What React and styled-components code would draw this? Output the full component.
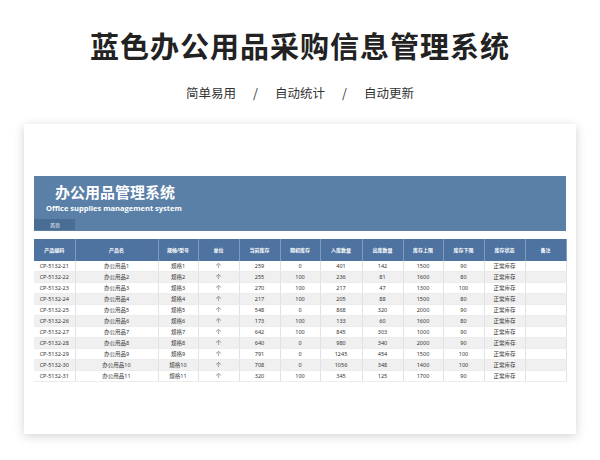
import React from "react";
import styled, { createGlobalStyle } from "styled-components";

const Global = createGlobalStyle`
  body { margin: 0; background: #fff; font-family: "Noto Sans CJK SC", "Noto Sans", sans-serif; }
`;

const Page = styled.div`
  width: 600px; height: 460px; overflow: hidden;
  display: flex; flex-direction: column; align-items: center;
`;
const Title = styled.h1`
  margin: 25px 0 0; font-size: 29px; font-weight: 700; color: #222; letter-spacing: 1px; line-height: 40px;
`;
const Sub = styled.div`
  margin-top: 19px; font-size: 12.5px; color: #333; display: flex; gap: 17px; line-height: 18px;
`;
const Card = styled.div`
  margin-top: 22px; width: 552px; height: 310px; background: #fff;
  box-shadow: 0 2px 10px rgba(0,0,0,0.18);
  padding: 52px 10px 0; box-sizing: border-box;
`;
const Banner = styled.div`
  background: #5b80a8; height: 55px; display: flex; flex-direction: column; color: #fff;
`;
const BTitle = styled.div`
  font-size: 15px; font-weight: 700; padding-left: 21px; margin-top: 6px; line-height: 20px;
`;
const BSub = styled.div`
  font-size: 7.5px; font-weight: 700; padding-left: 12px; line-height: 12px;
  font-family: "Open Sans", sans-serif;
`;
const Tab = styled.div`
  margin-top: auto; margin-bottom: 1px; width: 41px; height: 11px; background: #4a6d95;
  font-size: 5px; line-height: 11px; padding-left: 16px; box-sizing: border-box;
`;
const Table = styled.table`
  margin-top: 8px; width: 100%; border-collapse: collapse; table-layout: fixed;
  font-size: 5.5px; color: #333; font-family: "Noto Sans", "Noto Sans CJK SC", sans-serif;
`;
const Th = styled.th`
  background: #4e73a0; color: #fff; font-weight: 700; height: 22px; padding: 0;
  border-right: 1px solid #7f9bbd; font-size: 5px; line-height: 8px;
`;
const Tr = styled.tr`
  background: ${p => (p.$alt ? "#f0f0f0" : "#fff")};
`;
const Td = styled.td`
  height: 10px; padding: 0; line-height: 10px; text-align: center; border-right: 1px solid #e2e2e2;
  border-bottom: 1px solid #ececec; white-space: nowrap; color: #333;
`;

const widths = [41, 83, 40, 41, 41, 40, 42, 41, 40, 41, 41, 41];
const heads = ["产品编码", "产品名", "规格/型号", "单位", "当前库存", "期初库存", "入库数量", "出库数量", "库存上限", "库存下限", "库存状态", "备注"];
const data = [
  [259, 0, 401, 142, 1500, 90],
  [255, 100, 236, 81, 1600, 80],
  [270, 100, 217, 47, 1300, 100],
  [217, 100, 205, 88, 1500, 80],
  [548, 0, 868, 320, 2000, 90],
  [173, 100, 133, 60, 1600, 80],
  [642, 100, 845, 303, 1000, 90],
  [640, 0, 980, 340, 2000, 90],
  [791, 0, 1245, 454, 1500, 100],
  [708, 0, 1056, 348, 1400, 100],
  [320, 100, 345, 125, 1700, 90],
];

export default function App() {
  return (
    <Page>
      <Global />
      <Title>蓝色办公用品采购信息管理系统</Title>
      <Sub><span>简单易用</span><span>/</span><span>自动统计</span><span>/</span><span>自动更新</span></Sub>
      <Card>
        <Banner>
          <BTitle>办公用品管理系统</BTitle>
          <BSub>Office supplies management system</BSub>
          <Tab>首页</Tab>
        </Banner>
        <Table>
          <colgroup>{widths.map((w, i) => <col key={i} style={{ width: w }} />)}</colgroup>
          <thead><tr>{heads.map(h => <Th key={h}>{h}</Th>)}</tr></thead>
          <tbody>
            {data.map((r, i) => (
              <Tr key={i} $alt={i % 2 === 1}>
                <Td>CP-5132-{21 + i}</Td>
                <Td>办公用品{i + 1}</Td>
                <Td>规格{i + 1}</Td>
                <Td>个</Td>
                {r.map((v, j) => <Td key={j}>{v}</Td>)}
                <Td>正常库存</Td>
                <Td />
              </Tr>
            ))}
          </tbody>
        </Table>
      </Card>
    </Page>
  );
}
